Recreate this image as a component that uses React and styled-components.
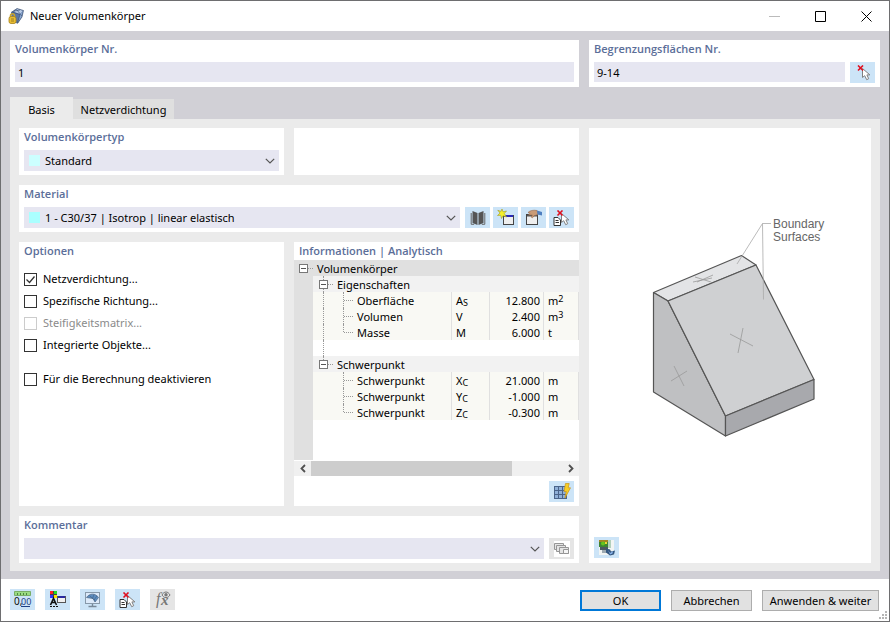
import React, { useState } from "react";
import styled, { createGlobalStyle, css } from "styled-components";

const GlobalStyle = createGlobalStyle`
  * {
    box-sizing: border-box;
  }

  body {
    margin: 0;
    background: #fff;
  }

  body, button, input, select {
    font-family: "Noto Sans", "Open Sans", sans-serif;
    font-size: 11px;
    line-height: 16px;
    color: #000;
  }
`;

/* ---------- icons ---------- */

const Cursor = () => (
  <path d="M7.5 3.5v9l2.2-1.8 2 4 2-1-1.8-3.8h3z" fill="#fff" stroke="#808080" />
);

const RedCross = ({ x = 3 }) => (
  <path d={`M${x} .5l5 5M${x + 5} .5l-5 5`} stroke="#e01020" strokeWidth="1.6" fill="none" />
);

const PickIcon = () => (
  <svg width="16" height="16" viewBox="0 0 16 16">
    <Cursor />
    <RedCross x={3} />
  </svg>
);

const PickListIcon = () => (
  <svg width="17" height="16" viewBox="0 0 17 16">
    <path d="M1 7.5h4L7.5 10v5.5H1z" fill="#fff" stroke="#333" />
    <path d="M2.5 10.5h3M2.5 12.5h3.5" stroke="#333" />
    <g transform="translate(1 0)">
      <Cursor />
    </g>
    <RedCross x={4.5} />
  </svg>
);

const BookIcon = () => (
  <svg width="16" height="16" viewBox="0 0 16 16">
    <path d="M2.5 1L7.5 3v12l-5-2zM13.5 1L8.5 3v12l5-2z" fill="#555" />
    <path d="M1.2 3v11.3h3M14.8 3v11.3h-3" fill="none" stroke="#666" />
  </svg>
);

const NewWindowIcon = () => (
  <svg width="18" height="17" viewBox="0 0 18 17">
    <rect x="6.5" y="6.5" width="10" height="9" fill="#eee" stroke="#444" />
    <path d="M7 6h9v2H7z" fill="#2929b8" />
    <path d="M5 0l1 2.8L9.5 2 7.3 4.5 9.5 8 6 6.7 4.5 9.5 3.7 6.3.5 6.5 3 4 .8 1.3 4 2.4z" fill="#f4ef2a" stroke="#a09a24" strokeWidth=".6" />
  </svg>
);

const EditWindowIcon = () => (
  <svg width="18" height="17" viewBox="0 0 18 17">
    <rect x="1.5" y="5.5" width="11" height="10" fill="#eee" stroke="#444" />
    <path d="M2 6h10v1.5H2z" fill="#555" />
    <path d="M3 3.5C5 1.5 8 .8 12 1.5l1 4-4 1.3-1.5 2-1.2-.6 1-2.2H3.5L5 4.3z" fill="#c99b77" stroke="#93684b" strokeWidth=".6" />
    <path d="M12 1.5L17 3v3.5l-4.5-1z" fill="#4f7fc0" />
  </svg>
);

const CalcGridIcon = () => (
  <svg width="18" height="17" viewBox="0 0 18 17">
    <rect x="1" y="3" width="13" height="13" fill="#8fb0d8" />
    <path d="M1.5 3v13M5.5 3v13M9.5 3v13M13.5 3v13M1 3.5h13M1 7.5h13M1 11.5h13M1 15.5h13" stroke="#4a648a" />
    <path d="M12.5.5h3.7l-1 4.3h2.3L12 15l1.2-6.5H11z" fill="#f7ce25" stroke="#c8951a" strokeWidth=".7" />
  </svg>
);

const CommentIcon = () => (
  <svg width="16" height="16" viewBox="0 0 16 16">
    <path d="M0 0h16v16H0z" fill="#fff" />
    <g fill="#e4e4e4" stroke="#969696">
      <path d="M.5 2.5h9v6h-9z" />
      <path d="M2.5 4.5h9v6h-9z" />
      <path d="M5.5 6.5h9v6h-9z" />
      <path d="M9.5 8.500h5v4h-5z" fill="#f5f5f5" />
    </g>
  </svg>
);

const ImageSaveIcon = () => (
  <svg width="17" height="17" viewBox="0 0 17 17">
    <path d="M1 1h15v15H1z" fill="#f2f5f4" />
    <path d="M1 1h9v7H1z" fill="#3d8434" />
    <path d="M1 1h9v2H1z" fill="#a18425" />
    <circle cx="5" cy="4.5" r="2" fill="#66c51e" />
    <path d="M7 3h2v2H7z" fill="#e8d832" />
    <path d="M10 1h3v8h-3z" fill="#b2d0bc" />
    <path d="M2 8h8v3H2z" fill="#4c5962" />
    <path d="M4 11h6v3H4z" fill="#9daab2" />
    <path d="M8 9.500l4 1 1 2 4-1-1 4-4 1-4-3z" fill="#32567f" />
    <path d="M10 11l2 3 3-2-.5 2.500-2.500 1z" fill="#8ab4ea" />
  </svg>
);

const UnitsIcon = () => (
  <svg width="19" height="17" viewBox="0 0 19 17">
    <path d="M1.5.5h16v4h-16z" fill="#9adb83" stroke="#79ae67" />
    <path d="M4.5 2v2M7.5 2v2M10.5 2v2M13.5 2v2" stroke="#4d863f" />
    <text x="1" y="14" fontSize="10" fill="#111">0,</text>
    <text x="8" y="14" fontSize="9" fill="#1d3f85">00</text>
    <path d="M8 15.5h9" stroke="#1d3f85" />
  </svg>
);

const DisplayIcon = () => (
  <svg width="18" height="17" viewBox="0 0 18 17">
    <path d="M1 0h7v7H1z" fill="#444" />
    <path d="M1 0h3v3H1z" fill="#f22" />
    <path d="M5 0h3v3H5z" fill="#2d2" />
    <path d="M1 4h3v3H1z" fill="#33f" />
    <path d="M5 4h3v3H5z" fill="#fd0" />
    <path d="M1.500 14L4.500 7.500l3 6.500M2.700 11.500h4" fill="none" stroke="#111" strokeWidth="1.600" />
    <path d="M1 15.500h8" stroke="#111" strokeDasharray="2 1" />
    <rect x="8.500" y="5.500" width="8" height="6" fill="#f0f0f0" stroke="#555" />
    <path d="M9 5h7v2H9z" fill="#2929a0" />
  </svg>
);

const MonitorIcon = () => (
  <svg width="17" height="17" viewBox="0 0 17 17">
    <rect x="1.5" y="1.5" width="14" height="11" fill="#dceafa" stroke="#8799aa" />
    <path d="M8.5 13v2.5M4.5 15.5h8" stroke="#778899" strokeWidth="1.4" />
    <path d="M2.500 6.500C5.500 2 11.500 2 14.500 6.500L11 11 9 7.500z" fill="#5d8dc0" stroke="#4a6483" strokeWidth=".7" />
    <path d="M5.500 4.500l5.500 5M10 3.500L8.500 7.500M13 4.800L10 9" stroke="#3e5e82" strokeWidth=".6" />
  </svg>
);

const FormulaIcon = () => (
  <svg width="18" height="17" viewBox="0 0 18 17" fill="#777">
    <text x="2" y="13" fontSize="16" fontStyle="italic" fontFamily="Liberation Serif, serif">f</text>
    <text x="7" y="14" fontSize="15" fontStyle="italic" fontWeight="bold" fontFamily="Liberation Serif, serif">x</text>
    <path d="M8 4c2-4 6-4 8 0-2 3.500-6 3.500-8 0z" fill="#e6e6e6" stroke="#777" />
    <circle cx="12" cy="3.800" r="1.700" />
  </svg>
);

const AppIcon = () => (
  <svg width="17" height="17" viewBox="0 0 17 17">
    <path d="M3 4.500L9 .5l6.500 2L14 9l-4.500 6.500L4 14z" fill="#5a76a4" />
    <path d="M9 .8l6 2L12 6 6 4z" fill="#b9cbe6" />
    <path d="M12 6l3-3-1.300 6-4 6z" fill="#8aa6cf" />
    <path d="M4 4l8 2.500L9.500 15M8.500 1.500L14 8M6 3l6-1M3 4.500L9 .5l6.500 2L14 9l-4.500 6.500" fill="none" stroke="#34496b" strokeWidth=".6" />
    <path d="M2.500 9V7.500C2.500 5 6.500 5 6.500 7.500V9" fill="none" stroke="#c9a42b" strokeWidth="1.500" />
    <rect x="1" y="8.500" width="7" height="7" rx="2" fill="#e8bd34" stroke="#a6821a" strokeWidth=".8" />
    <path d="M3 11h3M3 13h3" stroke="#89701c" strokeWidth=".8" />
  </svg>
);

const ChevronIcon = () => (
  <svg width="10" height="6" viewBox="0 0 10 6" fill="none" stroke="#555" strokeWidth="1.2">
    <path d="M.8.8L5 5 9.200.8" />
  </svg>
);

const SolidDrawing = () => (
  <svg width="200" height="250" viewBox="-10 8 200 250">
    <g stroke="#555" strokeWidth="1.2" strokeLinejoin="round">
      <path d="M13.500 92.500L101.500 55.500 116 65 28 101z" fill="#e3e4e6" />
      <path d="M13.500 92.500L28 101 85.500 216V236L13.500 192z" fill="#bfc0c2" />
      <path d="M28 101L116 65 174 179.500 85.500 216z" fill="#cfd0d2" />
      <path d="M85.500 216L174 179.500V199L85.500 236z" fill="#a8a9ad" />
    </g>
    <g stroke="#999" strokeWidth=".8" fill="none">
      <path d="M53 82l19-4M55 77l16 5M57 82l16-7" />
      <path d="M90 134l23 12M103 128l-5 25" />
      <path d="M34 166l10 20M31 181l16-10" />
      <path d="M131 23.500h-8.500L97 64M122.500 23.500l1 76" stroke="#aaa" />
    </g>
    <g fill="#666" fontSize="12" fontFamily="Liberation Sans, Arial, sans-serif">
      <text x="133" y="28">Boundary</text>
      <text x="133" y="41">Surfaces</text>
    </g>
  </svg>
);

/* ---------- shared parts ---------- */

const Panel = styled.section`
  display: flex;
  flex-direction: column;
  min-width: 0;
  min-height: 47px;
  padding: 0 5px 4px;
  background: #fff;
`;

const labelStyle = css`
  display: block;
  margin: 0 0 4px;
  font-family: "Open Sans", "Noto Sans", sans-serif;
  font-size: 11px;
  line-height: 18px;
  font-weight: 600;
  color: #5b6e99;
  white-space: nowrap;
`;

const Label = styled.label`
  ${labelStyle}
`;

const Heading = styled.h2`
  ${labelStyle}
`;

const FieldRow = styled.div`
  display: flex;
  align-items: flex-start;
  gap: 5px;
`;

const ButtonGroup = styled.div`
  display: flex;
  gap: ${({ $gap }) => $gap || 3}px;
`;

const TextField = styled.input`
  flex: 1;
  min-width: 0;
  height: 20px;
  padding: 0 3px;
  border: 0;
  border-radius: 0;
  background: #e6e6f1;
`;

const IconButton = styled.button`
  display: flex;
  flex: none;
  align-items: center;
  justify-content: center;
  width: 25px;
  height: 21px;
  padding: 0;
  border: 0;
  background: ${({ disabled }) => (disabled ? "#e5e5e5" : "#cce4f7")};
`;

const Combo = styled.div`
  position: relative;
  display: flex;
  flex: 1;
  align-items: center;
  min-width: 0;
  height: 21px;
  background: #e6e6f1;

  select {
    flex: 1;
    min-width: 0;
    height: 21px;
    padding: 1px 20px 0 5px;
    border: 0;
    appearance: none;
    background: transparent;
  }

  svg {
    position: absolute;
    right: 4px;
    pointer-events: none;
  }
`;

const Swatch = styled.span`
  width: 11px;
  height: 11px;
  margin-left: 5px;
  background: ${({ $color }) => $color};
`;

const ComboBox = ({ id, color, options }) => (
  <Combo>
    {color && <Swatch $color={color} />}
    <select id={id}>
      {options.map((option) => (
        <option key={option}>{option}</option>
      ))}
    </select>
    <ChevronIcon />
  </Combo>
);

/* ---------- window ---------- */

const Window = styled.div`
  display: flex;
  flex-direction: column;
  min-height: 100vh;
  border: 1px solid #6e6e70;
  background: #fff;
`;

const TitleBar = styled.header`
  display: flex;
  align-items: center;
  height: 30px;
  padding-left: 7px;

  h1 {
    flex: 1;
    margin: 0 0 0 5px;
    font-size: 11px;
    line-height: 16px;
    font-weight: 400;
  }
`;

const CaptionButton = styled.button`
  display: flex;
  align-items: center;
  justify-content: center;
  width: 46px;
  height: 30px;
  padding: 0;
  border: 0;
  background: transparent;
`;

const Body = styled.main`
  display: flex;
  flex: 1;
  flex-direction: column;
  padding: 9px 9px 8px;
  background: #d1d0d6;
`;

const TopRow = styled.div`
  display: grid;
  grid-template-columns: minmax(0, 1fr) 291px;
  gap: 10px;
`;

const Tabs = styled.div`
  display: flex;
  align-items: flex-end;
  height: 22px;
  margin-top: 10px;
`;

const Tab = styled.button`
  width: ${({ $active }) => ($active ? 63 : 101)}px;
  height: ${({ $active }) => ($active ? 22 : 20)}px;
  padding: ${({ $active }) => ($active ? 3 : 1)}px 0 0;
  border: 0;
  background: ${({ $active }) => ($active ? "#ebebeb" : "#dfdfdf")};
`;

const TabPage = styled.div`
  display: grid;
  flex: 1;
  grid-template-columns: minmax(0, 1fr) 282px;
  gap: 10px;
  padding: 9px 9px 8px;
  background: #ebebeb;
`;

const Main = styled.div`
  display: flex;
  flex-direction: column;
  gap: 10px;
  min-width: 0;
`;

const Split = styled.div`
  display: grid;
  flex: ${({ $grow }) => ($grow ? 1 : "none")};
  grid-template-columns: 265fr 285fr;
  gap: 10px;
`;

/* ---------- options ---------- */

const Options = styled.div`
  display: flex;
  flex-direction: column;
  padding-top: 4px;
`;

const Option = styled.label`
  display: flex;
  align-items: center;
  gap: 6px;
  height: 22px;
  margin-top: ${({ $spaced }) => ($spaced ? 12 : 0)}px;
  color: ${({ $disabled }) => ($disabled ? "#8a8a8a" : "#000")};

  input {
    width: 13px;
    height: 13px;
    margin: 0;
    appearance: none;
    border: 1px solid #333;
    background: #fff;
  }

  input:disabled {
    border-color: #ccc;
  }

  input:checked {
    background: url("data:image/svg+xml,%3Csvg xmlns='http://www.w3.org/2000/svg' viewBox='0 0 11 11'%3E%3Cpath d='M1.5 5.5l3 3 5-6' fill='none' stroke='%23333' stroke-width='1.3'/%3E%3C/svg%3E");
  }
`;

/* ---------- property tree ---------- */

const TreePanel = styled(Panel)`
  padding: 0 0 4px;

  > h2 {
    margin: 0;
    padding-left: 5px;
  }
`;

const TreeArea = styled.div`
  flex: 1;
  min-height: 200px;
  margin-bottom: 1px;
  background: linear-gradient(to right, #e0e0e0 19px, #fff 19px);
`;

const Table = styled.table`
  width: 100%;
  table-layout: fixed;
  border-collapse: separate;
  border-spacing: 0;

  td, th {
    height: 16px;
    padding: 0;
    font-weight: 400;
    text-align: left;
    white-space: nowrap;
  }
`;

const rowColors = { root: "#e0e0e0", group: "#f2f2f2", item: "#f9f9f4", blank: "#fff" };

const Row = styled.tr`
  th {
    background: linear-gradient(to right, #e0e0e0 19px, ${({ $kind }) => rowColors[$kind]} 19px);
  }

  td {
    padding: 2px 0 0 4px;
    border-right: 1px solid #e0e0e0;
    background: ${({ $kind }) => rowColors[$kind]};
    line-height: 14px;
  }

  ${({ $kind }) =>
    $kind === "item" &&
    css`
      th {
        border-right: 1px solid #e0e0e0;
      }
    `}

  td:nth-child(3) {
    padding: 2px 3px 0 0;
    text-align: right;
  }

  sub, sup {
    font-size: 9px;
    line-height: 0;
  }

  sub {
    vertical-align: -1px;
  }

  sup {
    vertical-align: 3px;
  }
`;

const Branch = styled.div`
  display: flex;
  height: 16px;
  line-height: 18px;

  > span:last-child {
    padding-left: 3px;
  }
`;

/* one 20px step of indentation, with its dotted connector */
const Guide = styled.span`
  position: relative;
  flex: none;
  width: 20px;
  height: 16px;

  &::before {
    content: "";
    position: absolute;
    top: 0;
    left: 9px;
    height: ${({ $end }) => ($end ? 8 : 16)}px;
    border-left: ${({ $line }) => ($line ? "1px dotted #999" : "0")};
  }

  &::after {
    content: "";
    position: absolute;
    top: 8px;
    left: 10px;
    right: 1px;
    border-top: ${({ $arm }) => ($arm ? "1px dotted #999" : "0")};
  }
`;

const Expander = styled.button`
  position: absolute;
  z-index: 1;
  top: 4px;
  left: 5px;
  width: 9px;
  height: 9px;
  padding: 0;
  border: 1px solid #777;
  background: linear-gradient(#555, #555) center / 5px 1px no-repeat #fff;
`;

const groups = [
  {
    name: "Eigenschaften",
    items: [
      ["Oberfläche", "A", "S", "12.800", "m", "2"],
      ["Volumen", "V", "", "2.400", "m", "3"],
      ["Masse", "M", "", "6.000", "t", ""],
    ],
  },
  {
    name: "Schwerpunkt",
    items: [
      ["Schwerpunkt", "X", "C", "21.000", "m", ""],
      ["Schwerpunkt", "Y", "C", "-1.000", "m", ""],
      ["Schwerpunkt", "Z", "C", "-0.300", "m", ""],
    ],
  },
];

const PropertyTree = () => (
  <Table>
    <colgroup>
      <col />
      <col width="38" />
      <col width="54" />
      <col width="35" />
    </colgroup>
    <tbody>
      <Row $kind="root">
        <th colSpan={4}>
          <Branch>
            <Guide $arm>
              <Expander aria-label="Volumenkörper" />
            </Guide>
            <span>Volumenkörper</span>
          </Branch>
        </th>
      </Row>
      {groups.map((group, index) => {
        const last = index === groups.length - 1;
        return (
          <React.Fragment key={group.name}>
            <Row $kind="group">
              <th colSpan={4}>
                <Branch>
                  <Guide />
                  <Guide $line $arm $end={last}>
                    <Expander aria-label={group.name} />
                  </Guide>
                  <span>{group.name}</span>
                </Branch>
              </th>
            </Row>
            {group.items.map(([name, symbol, sub, value, unit, sup], i) => (
              <Row key={symbol} $kind="item">
                <th>
                  <Branch>
                    <Guide />
                    <Guide $line={!last} />
                    <Guide $line $arm $end={i === group.items.length - 1} />
                    <span>{name}</span>
                  </Branch>
                </th>
                <td>
                  {symbol}
                  {sub && <sub>{sub}</sub>}
                </td>
                <td>{value}</td>
                <td>
                  {unit}
                  {sup && <sup>{sup}</sup>}
                </td>
              </Row>
            ))}
            {!last && (
              <Row $kind="blank">
                <th colSpan={4}>
                  <Branch>
                    <Guide />
                    <Guide $line />
                  </Branch>
                </th>
              </Row>
            )}
          </React.Fragment>
        );
      })}
    </tbody>
  </Table>
);

const ScrollBar = styled.div`
  display: flex;
  height: 15px;
  background: #f0f0f0;

  button {
    display: flex;
    align-items: center;
    justify-content: center;
    width: 17px;
    padding: 0;
    border: 0;
    background: transparent;
  }
`;

const Track = styled.div`
  flex: 1;

  &::before {
    content: "";
    display: block;
    width: 80%;
    height: 15px;
    background: #cdcdcd;
  }
`;

const TreeFooter = styled.div`
  display: flex;
  justify-content: flex-end;
  padding: 5px 5px 0;
`;

/* ---------- preview and footer ---------- */

const Preview = styled(Panel)`
  padding: 0 5px 5px;

  figure {
    display: flex;
    flex: 1;
    align-items: center;
    justify-content: center;
    margin: 0;
  }
`;

const Footer = styled.footer`
  position: relative;
  display: flex;
  align-items: flex-start;
  justify-content: space-between;
  height: 42px;
  padding: 10px 10px 0 9px;
`;

const PushButton = styled.button`
  width: ${({ $wide }) => ($wide ? 117 : 81)}px;
  height: 21px;
  margin-top: 1px;
  padding: 0;
  border: ${({ $default }) => ($default ? "2px solid #0078d7" : "1px solid #adadad")};
  background: #e1e1e1;
  line-height: 17px;
  white-space: nowrap;
`;

const Grip = styled.svg`
  position: absolute;
  right: 2px;
  bottom: 2px;
`;

export default function App() {
  const [meshRefinement, setMeshRefinement] = useState(true);

  return (
    <Window>
      <GlobalStyle />
      <TitleBar>
        <AppIcon />
        <h1>Neuer Volumenkörper</h1>
        <CaptionButton aria-label="Minimieren">
          <svg width="11" height="11" stroke="#bbb">
            <path d="M0 5.500h11" />
          </svg>
        </CaptionButton>
        <CaptionButton aria-label="Maximieren">
          <svg width="11" height="11" fill="none" stroke="#000">
            <path d="M.5.5h10v10H.5z" />
          </svg>
        </CaptionButton>
        <CaptionButton aria-label="Schließen">
          <svg width="11" height="11" stroke="#000">
            <path d="M.5.5l10 10M10.500.5l-10 10" />
          </svg>
        </CaptionButton>
      </TitleBar>

      <Body>
        <TopRow>
          <Panel>
            <Label htmlFor="number">Volumenkörper Nr.</Label>
            <FieldRow>
              <TextField id="number" defaultValue="1" />
            </FieldRow>
          </Panel>
          <Panel>
            <Label htmlFor="surfaces">Begrenzungsflächen Nr.</Label>
            <FieldRow>
              <TextField id="surfaces" defaultValue="9-14" />
              <IconButton aria-label="Flächen auswählen">
                <PickIcon />
              </IconButton>
            </FieldRow>
          </Panel>
        </TopRow>

        <Tabs role="tablist">
          <Tab role="tab" aria-selected="true" $active>
            Basis
          </Tab>
          <Tab role="tab" aria-selected="false">
            Netzverdichtung
          </Tab>
        </Tabs>

        <TabPage>
          <Main>
            <Split>
              <Panel>
                <Label htmlFor="type">Volumenkörpertyp</Label>
                <FieldRow>
                  <ComboBox id="type" color="#ccffff" options={["Standard"]} />
                </FieldRow>
              </Panel>
              <Panel />
            </Split>

            <Panel>
              <Label htmlFor="material">Material</Label>
              <FieldRow>
                <ComboBox
                  id="material"
                  color="#aaffff"
                  options={["1 - C30/37 | Isotrop | linear elastisch"]}
                />
                <ButtonGroup>
                  <IconButton aria-label="Bibliothek">
                    <BookIcon />
                  </IconButton>
                  <IconButton aria-label="Neu">
                    <NewWindowIcon />
                  </IconButton>
                  <IconButton aria-label="Bearbeiten">
                    <EditWindowIcon />
                  </IconButton>
                  <IconButton aria-label="Auswählen">
                    <PickListIcon />
                  </IconButton>
                </ButtonGroup>
              </FieldRow>
            </Panel>

            <Split $grow>
              <Panel>
                <Heading>Optionen</Heading>
                <Options>
                  <Option>
                    <input
                      type="checkbox"
                      checked={meshRefinement}
                      onChange={(e) => setMeshRefinement(e.target.checked)}
                    />
                    Netzverdichtung...
                  </Option>
                  <Option>
                    <input type="checkbox" />
                    Spezifische Richtung...
                  </Option>
                  <Option $disabled>
                    <input type="checkbox" disabled />
                    Steifigkeitsmatrix...
                  </Option>
                  <Option>
                    <input type="checkbox" />
                    Integrierte Objekte...
                  </Option>
                  <Option $spaced>
                    <input type="checkbox" />
                    Für die Berechnung deaktivieren
                  </Option>
                </Options>
              </Panel>

              <TreePanel>
                <Heading>Informationen | Analytisch</Heading>
                <TreeArea>
                  <PropertyTree />
                </TreeArea>
                <ScrollBar>
                  <button aria-label="Nach links">
                    <svg width="6" height="9" fill="none" stroke="#505050" strokeWidth="1.8">
                      <path d="M5 1L1.500 4.500 5 8" />
                    </svg>
                  </button>
                  <Track />
                  <button aria-label="Nach rechts">
                    <svg width="6" height="9" fill="none" stroke="#505050" strokeWidth="1.8">
                      <path d="M1 1l3.500 3.500L1 8" />
                    </svg>
                  </button>
                </ScrollBar>
                <TreeFooter>
                  <IconButton aria-label="Berechnen">
                    <CalcGridIcon />
                  </IconButton>
                </TreeFooter>
              </TreePanel>
            </Split>

            <Panel>
              <Label htmlFor="comment">Kommentar</Label>
              <FieldRow>
                <ComboBox id="comment" options={[""]} />
                <IconButton aria-label="Kommentare" disabled>
                  <CommentIcon />
                </IconButton>
              </FieldRow>
            </Panel>
          </Main>

          <Preview>
            <figure>
              <SolidDrawing />
            </figure>
            <IconButton aria-label="Bild speichern">
              <ImageSaveIcon />
            </IconButton>
          </Preview>
        </TabPage>
      </Body>

      <Footer>
        <ButtonGroup $gap={10}>
          <IconButton aria-label="Einheiten">
            <UnitsIcon />
          </IconButton>
          <IconButton aria-label="Anzeige">
            <DisplayIcon />
          </IconButton>
          <IconButton aria-label="Ansicht">
            <MonitorIcon />
          </IconButton>
          <IconButton aria-label="Objekt auswählen">
            <PickListIcon />
          </IconButton>
          <IconButton aria-label="Formel" disabled>
            <FormulaIcon />
          </IconButton>
        </ButtonGroup>
        <ButtonGroup $gap={10}>
          <PushButton $default>OK</PushButton>
          <PushButton>Abbrechen</PushButton>
          <PushButton $wide>Anwenden &amp; weiter</PushButton>
        </ButtonGroup>
        <Grip width="8" height="8" fill="#b5b5b5">
          <path d="M6 0h2v2H6zM3 3h2v2H3zM6 3h2v2H6zM0 6h2v2H0zM3 6h2v2H3zM6 6h2v2H6z" />
        </Grip>
      </Footer>
    </Window>
  );
}
